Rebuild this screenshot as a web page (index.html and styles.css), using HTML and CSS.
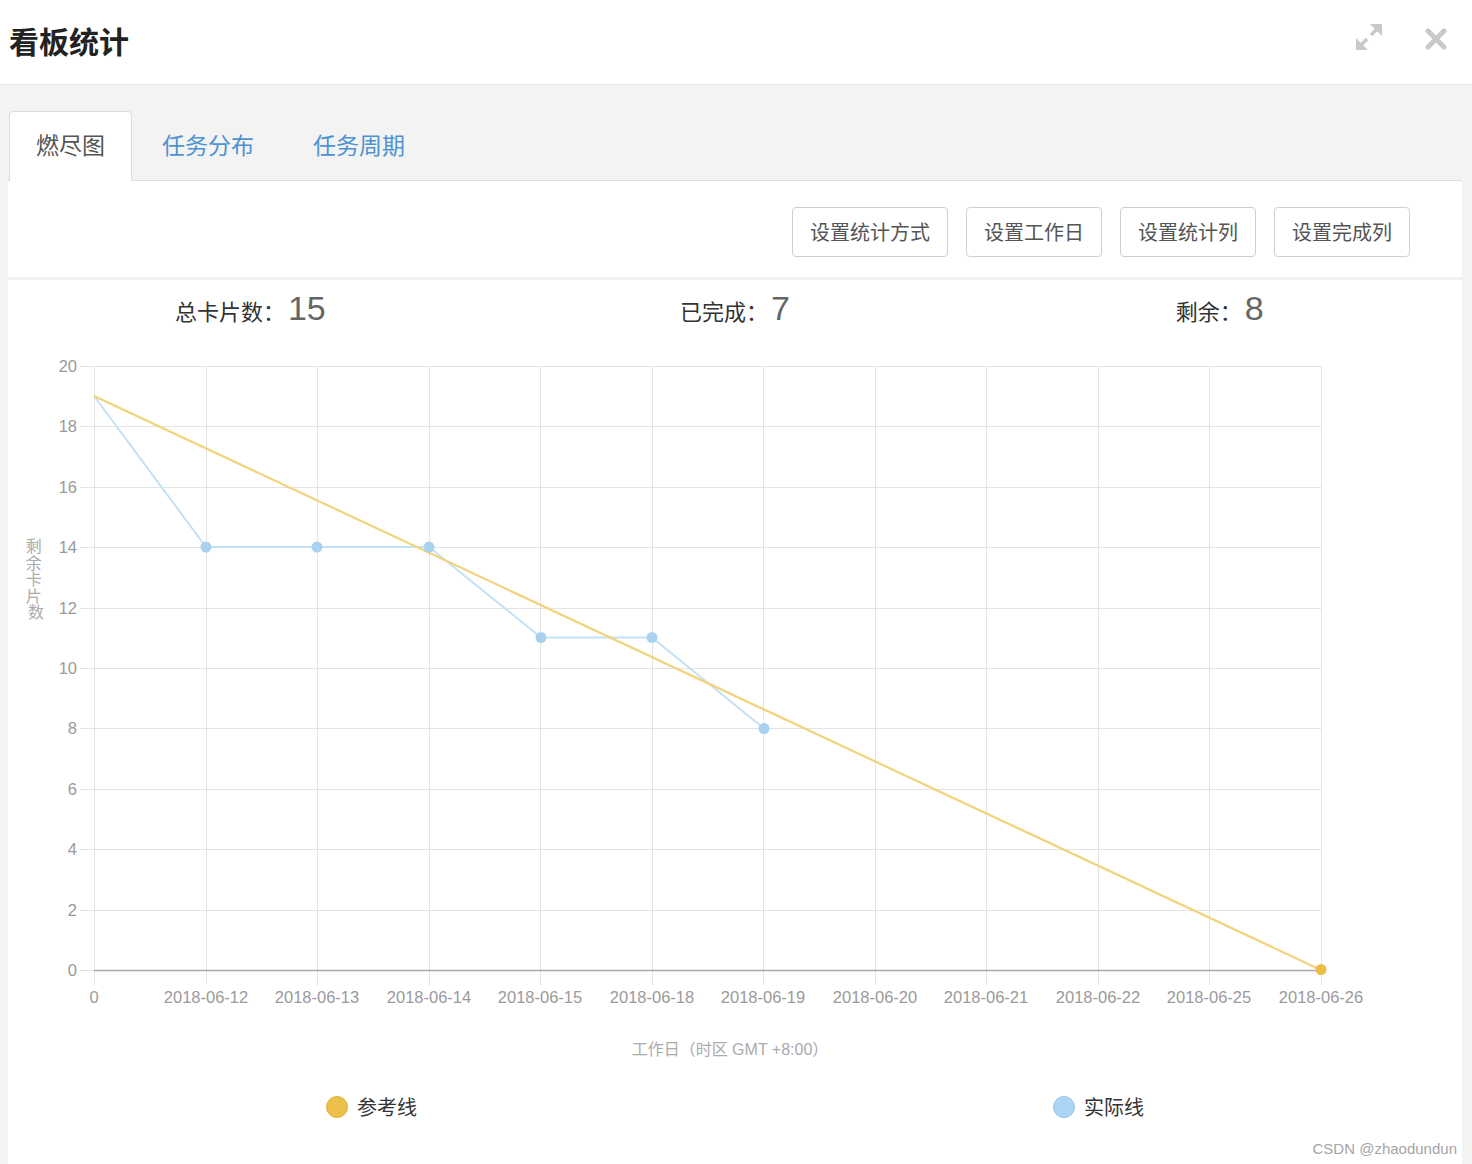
FILE: index.html
```html
<!DOCTYPE html>
<html lang="zh">
<head>
<meta charset="utf-8">
<title>看板统计</title>
<link rel="stylesheet" href="styles.css">
</head>
<body>
<div class="page">
  <header class="header">
    <h1 class="title">看板统计</h1>
    <div class="header-icons">
      <svg class="icon-expand" width="28" height="28" viewBox="0 0 28 28" aria-hidden="true">
        <polygon points="15,1 27,1 27,13" fill="#c9c9c9"/>
        <line x1="22" y1="6" x2="16" y2="12" stroke="#c9c9c9" stroke-width="3.6"/>
        <polygon points="1,15 1,27 13,27" fill="#c9c9c9"/>
        <line x1="6" y1="22" x2="12" y2="16" stroke="#c9c9c9" stroke-width="3.6"/>
      </svg>
      <svg class="icon-close" width="22" height="22" viewBox="0 0 22 22" aria-hidden="true">
        <line x1="3" y1="3" x2="19" y2="19" stroke="#c9c9c9" stroke-width="5" stroke-linecap="round"/>
        <line x1="19" y1="3" x2="3" y2="19" stroke="#c9c9c9" stroke-width="5" stroke-linecap="round"/>
      </svg>
    </div>
  </header>

  <main class="main">
    <nav class="tabs">
      <div class="tab tab-active">燃尽图</div>
      <div class="tab">任务分布</div>
      <div class="tab">任务周期</div>
    </nav>

    <section class="toolbar">
      <button class="btn">设置统计方式</button>
      <button class="btn">设置工作日</button>
      <button class="btn">设置统计列</button>
      <button class="btn">设置完成列</button>
    </section>

    <section class="chart-panel">
      <div class="stats">
        <div class="stat"><span class="stat-label">总卡片数：</span><span class="stat-num">15</span></div>
        <div class="stat"><span class="stat-label">已完成：</span><span class="stat-num">7</span></div>
        <div class="stat"><span class="stat-label">剩余：</span><span class="stat-num">8</span></div>
      </div>

      <svg class="chart" width="1454" height="730" viewBox="0 0 1454 730">
        <g class="grid-h" stroke="#e4e4e4" stroke-width="1">
          <line x1="72" y1="26.5" x2="1313" y2="26.5"/>
          <line x1="72" y1="86.5" x2="1313" y2="86.5"/>
          <line x1="72" y1="147.5" x2="1313" y2="147.5"/>
          <line x1="72" y1="207.5" x2="1313" y2="207.5"/>
          <line x1="72" y1="268.5" x2="1313" y2="268.5"/>
          <line x1="72" y1="328.5" x2="1313" y2="328.5"/>
          <line x1="72" y1="388.5" x2="1313" y2="388.5"/>
          <line x1="72" y1="449.5" x2="1313" y2="449.5"/>
          <line x1="72" y1="509.5" x2="1313" y2="509.5"/>
          <line x1="72" y1="570.5" x2="1313" y2="570.5"/>
        </g>
        <g class="grid-v" stroke="#e4e4e4" stroke-width="1">
          <line x1="86.5" y1="26" x2="86.5" y2="645"/>
          <line x1="198.5" y1="26" x2="198.5" y2="645"/>
          <line x1="309.5" y1="26" x2="309.5" y2="645"/>
          <line x1="421.5" y1="26" x2="421.5" y2="645"/>
          <line x1="532.5" y1="26" x2="532.5" y2="645"/>
          <line x1="644.5" y1="26" x2="644.5" y2="645"/>
          <line x1="755.5" y1="26" x2="755.5" y2="645"/>
          <line x1="867.5" y1="26" x2="867.5" y2="645"/>
          <line x1="978.5" y1="26" x2="978.5" y2="645"/>
          <line x1="1090.5" y1="26" x2="1090.5" y2="645"/>
          <line x1="1201.5" y1="26" x2="1201.5" y2="645"/>
          <line x1="1313.5" y1="26" x2="1313.5" y2="645"/>
        </g>
        <line x1="72" y1="630.5" x2="86" y2="630.5" stroke="#e0e0e0" stroke-width="1"/>
        <line x1="86" y1="630.5" x2="1313" y2="630.5" stroke="#a8a8a8" stroke-width="1.5"/>

        <g class="y-labels" font-size="16.5" fill="#9a9a9a" text-anchor="end">
          <text x="69" y="32">20</text>
          <text x="69" y="92">18</text>
          <text x="69" y="153">16</text>
          <text x="69" y="213">14</text>
          <text x="69" y="274">12</text>
          <text x="69" y="334">10</text>
          <text x="69" y="394">8</text>
          <text x="69" y="455">6</text>
          <text x="69" y="515">4</text>
          <text x="69" y="576">2</text>
          <text x="69" y="636">0</text>
        </g>

        <g class="x-labels" font-size="16.5" fill="#9a9a9a" text-anchor="middle">
          <text x="86" y="663">0</text>
          <text x="198" y="663">2018-06-12</text>
          <text x="309" y="663">2018-06-13</text>
          <text x="421" y="663">2018-06-14</text>
          <text x="532" y="663">2018-06-15</text>
          <text x="644" y="663">2018-06-18</text>
          <text x="755" y="663">2018-06-19</text>
          <text x="867" y="663">2018-06-20</text>
          <text x="978" y="663">2018-06-21</text>
          <text x="1090" y="663">2018-06-22</text>
          <text x="1201" y="663">2018-06-25</text>
          <text x="1313" y="663">2018-06-26</text>
        </g>

        <text class="axis-title" x="722" y="715" font-size="16" fill="#ababab" text-anchor="middle">工作日（时区 GMT +8:00）</text>
        <text class="axis-title" x="28" y="212" font-size="16" fill="#ababab" text-anchor="middle">
          <tspan x="28" dy="0">剩</tspan>
          <tspan x="28" dy="16.5">余</tspan>
          <tspan x="28" dy="16.5">卡</tspan>
          <tspan x="28" dy="16.5">片</tspan>
          <tspan x="28" dy="16.5">数</tspan>
        </text>

        <polyline points="86,56 198,207 309,207 421,207 533,297.5 644,297.5 756,388.5" fill="none" stroke="#c3e1f5" stroke-width="2"/>
        <line x1="86" y1="56" x2="1313" y2="630" stroke="#f2d27a" stroke-width="2.2"/>

        <g fill="#a9d2f1">
          <circle cx="198" cy="207" r="5.5"/>
          <circle cx="309" cy="207" r="5.5"/>
          <circle cx="421" cy="207" r="5.5"/>
          <circle cx="533" cy="297.5" r="5.5"/>
          <circle cx="644" cy="297.5" r="5.5"/>
          <circle cx="756" cy="388.5" r="5.5"/>
        </g>
        <circle cx="1313" cy="629.5" r="5.5" fill="#ebbd43"/>
      </svg>

      <div class="legend">
        <div class="legend-item"><span class="dot dot-ref"></span><span class="legend-text">参考线</span></div>
        <div class="legend-item"><span class="dot dot-act"></span><span class="legend-text">实际线</span></div>
      </div>
    </section>
  </main>
  <div class="watermark">CSDN @zhaodundun</div>
</div>
</body>
</html>
```

FILE: styles.css
```css
html, body {
  margin: 0;
  padding: 0;
}
body {
  font-family: "Liberation Sans", "Noto Sans CJK SC", sans-serif;
  background: #f3f3f3;
  color: #333;
  width: 1472px;
  height: 1164px;
  overflow: hidden;
}
.page {
  position: relative;
  width: 1472px;
  height: 1164px;
  overflow: hidden;
}
.header {
  height: 84px;
  background: #fff;
  border-bottom: 1px solid #e4e4e4;
  display: flex;
  align-items: center;
  justify-content: space-between;
  padding: 0 25px 0 9px;
}
.title {
  margin: 0;
  font-size: 30px;
  font-weight: bold;
  color: #222;
  padding-bottom: 5px;
}
.header-icons {
  display: flex;
  align-items: center;
  gap: 42px;
  padding-bottom: 10px;
}
.icon-close {
  margin-top: 4px;
}
.main {
  padding: 26px 10px 0 8px;
  background: #f3f3f3;
}
.tabs {
  display: flex;
  gap: 3px;
  border-bottom: 1px solid #dcdcdc;
  height: 69px;
  padding-left: 1px;
}
.tab {
  height: 69px;
  line-height: 69px;
  padding: 0 26px;
  font-size: 23px;
  color: #4e92d2;
  border: 1px solid transparent;
  border-bottom: none;
  box-sizing: border-box;
}
.tab + .tab + .tab {
  padding-left: 28px;
}
.tab-active {
  background: #fff;
  color: #555;
  border: 1px solid #dcdcdc;
  border-bottom: none;
  border-radius: 4px 4px 0 0;
  height: 70px;
  padding: 0 26px;
}
.toolbar {
  background: #fff;
  height: 99px;
  display: flex;
  justify-content: flex-end;
  align-items: flex-start;
  gap: 18px;
  padding: 26px 52px 0 0;
  box-sizing: border-box;
  border-bottom: 3px solid #f1f1f1;
}
.btn {
  height: 50px;
  padding: 0 17px 2px;
  font-family: "Liberation Sans", "Noto Sans CJK SC", sans-serif;
  font-size: 20px;
  color: #555;
  background: #fff;
  border: 1px solid #cfcfcf;
  border-radius: 4px;
}
.chart-panel {
  background: #fff;
  height: 900px;
}
.stats {
  display: flex;
  height: 60px;
  align-items: center;
}
.stat {
  flex: 1;
  display: flex;
  justify-content: center;
  align-items: baseline;
  padding-bottom: 4px;
}
.stat-label {
  font-size: 22px;
  color: #333;
}
.stat-num {
  font-size: 34px;
  color: #666;
  padding-left: 3px;
}
.chart {
  display: block;
  font-family: "Liberation Sans", "Noto Sans CJK SC", sans-serif;
}
.legend {
  display: flex;
  margin-top: 22px;
}
.legend-item {
  flex: 1;
  display: flex;
  justify-content: center;
  align-items: center;
  gap: 9px;
}
.dot {
  width: 20px;
  height: 20px;
  border-radius: 50%;
  display: inline-block;
}
.dot-ref {
  background: #ecc04a;
  border: 1px solid #dcb23c;
}
.dot-act {
  background: #acd4f4;
  border: 1px solid #92c3eb;
}
.legend-text {
  font-size: 20px;
  color: #333;
}
.watermark {
  position: absolute;
  right: 15px;
  bottom: 7px;
  font-size: 15px;
  color: #a5a5a5;
}
```
